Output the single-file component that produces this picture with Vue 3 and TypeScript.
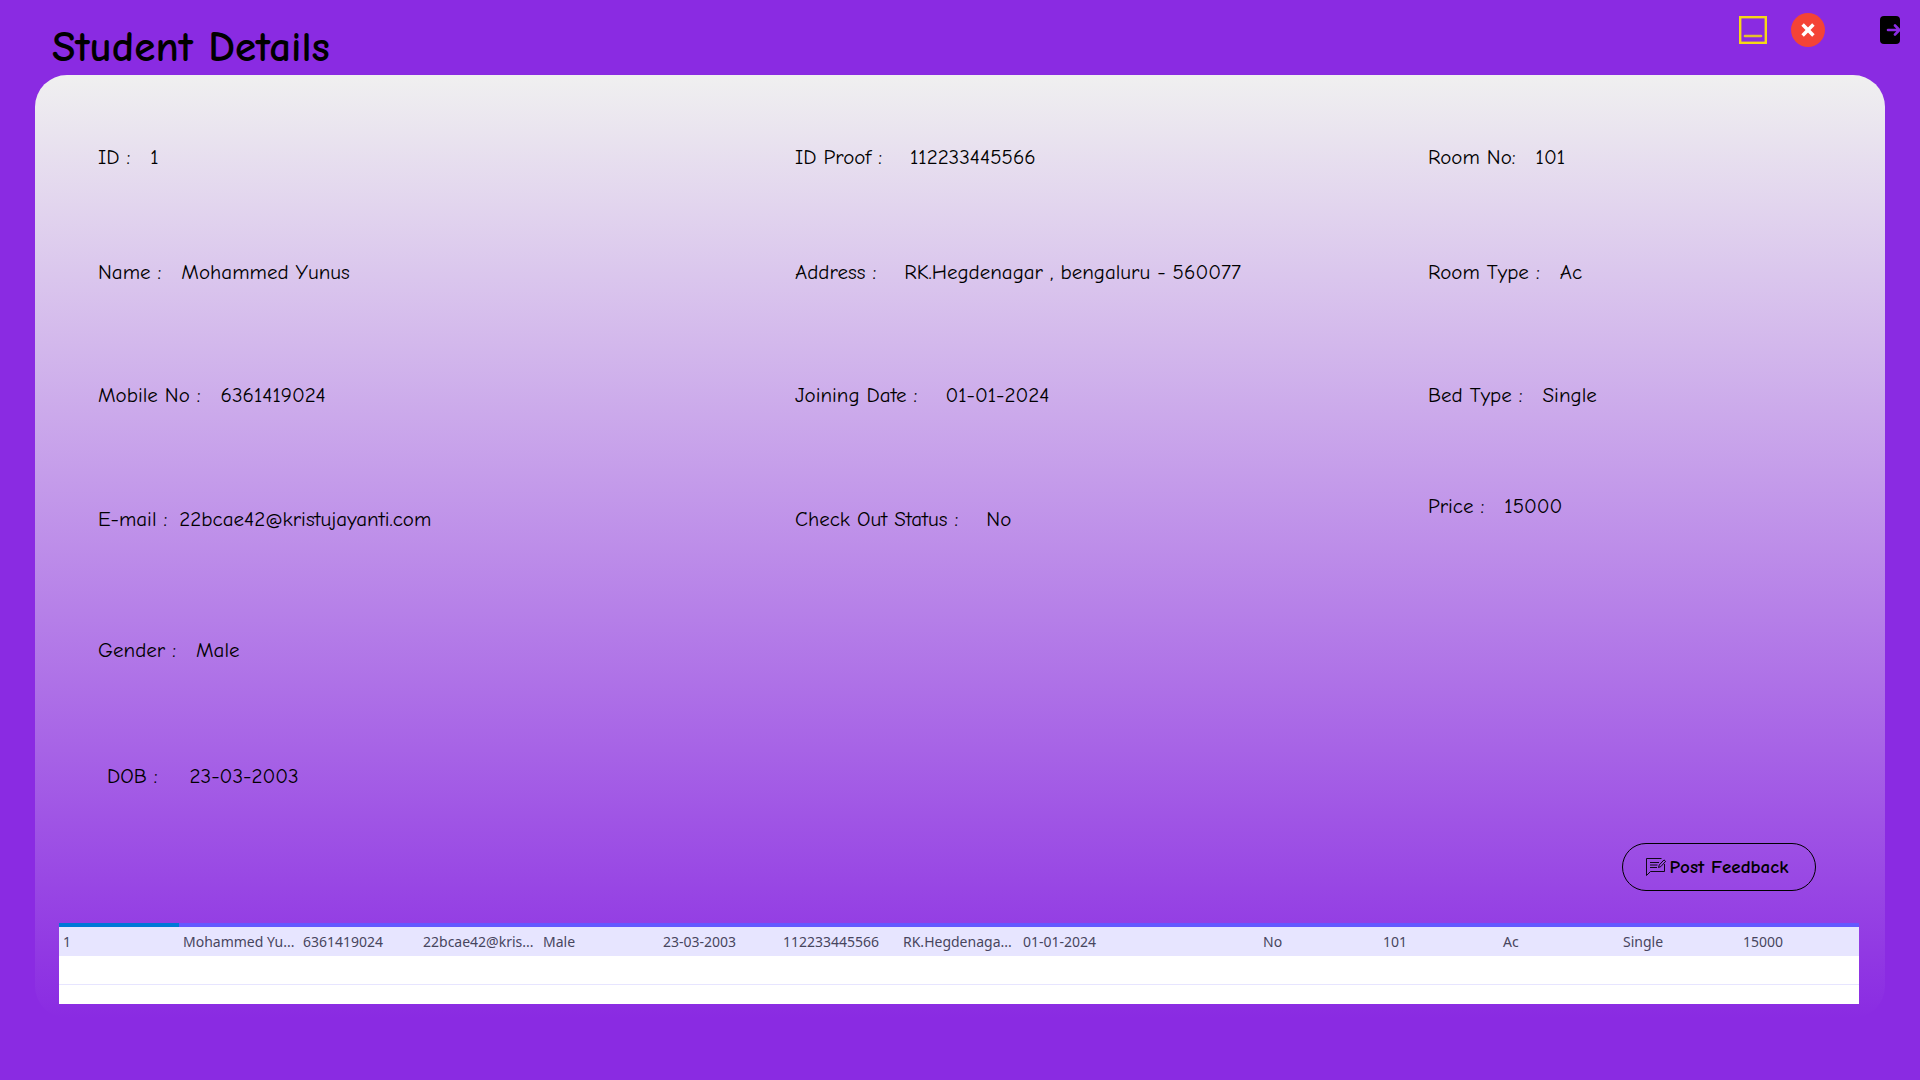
<script setup lang="ts">
interface Field {
  label: string
  value: string
  spacing?: 'tight' | 'inset'
}

const columns: Field[][] = [
  [
    { label: 'ID :', value: '1' },
    { label: 'Name :', value: 'Mohammed Yunus' },
    { label: 'Mobile No :', value: '6361419024' },
    { label: 'E-mail :', value: '22bcae42@kristujayanti.com', spacing: 'tight' },
    { label: 'Gender :', value: 'Male' },
    { label: 'DOB :', value: '23-03-2003', spacing: 'inset' },
  ],
  [
    { label: 'ID Proof :', value: '112233445566' },
    { label: 'Address :', value: 'RK.Hegdenagar , bengaluru - 560077' },
    { label: 'Joining Date :', value: '01-01-2024' },
    { label: 'Check Out Status :', value: 'No' },
  ],
  [
    { label: 'Room No:', value: '101' },
    { label: 'Room Type :', value: 'Ac' },
    { label: 'Bed Type :', value: 'Single' },
    { label: 'Price :', value: '15000' },
  ],
]

const record: string[] = [
  '1', 'Mohammed Yu...', '6361419024', '22bcae42@kris...', 'Male',
  '23-03-2003', '112233445566', 'RK.Hegdenaga...', '01-01-2024',
  '', 'No', '101', 'Ac', 'Single', '15000',
]
</script>

<template>
  <div class="window">
    <header class="titlebar">
      <h1>Student Details</h1>
      <div class="controls">
        <button type="button" class="minimize" aria-label="Minimize">
          <svg width="28" height="28" viewBox="0 0 28 28" fill="none">
            <rect x="1.2" y="1.2" width="25.6" height="25.6" stroke="#f6d816" stroke-width="2.4" />
            <path d="M6 20h16" stroke="#e6c02c" stroke-width="2.6" stroke-linecap="round" />
          </svg>
        </button>
        <button type="button" class="close" aria-label="Close">
          <svg width="34" height="34" viewBox="0 0 34 34">
            <circle cx="17" cy="17" r="17" fill="#f44336" />
            <path d="M11.6 11.6l10.800 10.800M22.400 11.600l-10.800 10.800" stroke="#fff" stroke-width="3.5" />
          </svg>
        </button>
        <button type="button" class="exit" aria-label="Log out">
          <svg width="20" height="28" viewBox="0 0 20 28">
            <rect width="20" height="28" rx="4" fill="#000" />
            <path d="M8 14h11M15 9.500l4.500 4.500-4.500 4.500" fill="none" stroke="#8a2be2" stroke-width="2.600" stroke-linecap="round" stroke-linejoin="round" />
          </svg>
        </button>
      </div>
    </header>

    <main class="panel">
      <section class="details">
        <dl v-for="(fields, i) in columns" :key="i" class="column">
          <div v-for="field in fields" :key="field.label" class="field" :class="field.spacing">
            <dt>{{ field.label }}</dt>
            <dd>{{ field.value }}</dd>
          </div>
        </dl>
      </section>

      <div class="actions">
        <button type="button" class="feedback">
          <svg width="20" height="20" viewBox="0 0 20 20" fill="none" stroke="#000" stroke-width="0.9">
            <path d="M15.500 1.500H.5v17l4-4H18.500V7" />
            <path d="M4 5.500h9M4 8h7.500M4 10.500h7" />
            <path d="M12.500 10.500l.8-2.600 4.700-5 1.600 1.500-4.800 5.200z" />
          </svg>
          Post Feedback
        </button>
      </div>

      <div class="grid">
        <table>
          <thead>
            <tr><th v-for="(_, i) in record" :key="i" scope="col"></th></tr>
          </thead>
          <tbody>
            <tr class="selected"><td v-for="(cell, i) in record" :key="i">{{ cell }}</td></tr>
            <tr class="blank"><td :colspan="record.length"></td></tr>
          </tbody>
        </table>
      </div>
    </main>
  </div>
</template>

<style>
body {
  margin: 0;
  background: #8a2be2;
}
</style>

<style scoped>
.window {
  box-sizing: border-box;
  min-height: 100vh;
  padding: 0 35px 60px;
  background: #8a2be2;
  color: #000;
  font-family: "Comic Sans MS", "Comic Neue", "Noto Sans", sans-serif;
}

.titlebar {
  display: flex;
  justify-content: space-between;
  align-items: flex-start;
  height: 75px;
}

h1 {
  margin: 19px 0 0 17px;
  font-size: 43px;
  line-height: 56px;
  font-weight: 700;
  white-space: nowrap;
}

.controls {
  display: flex;
  align-items: center;
  height: 60px;
  margin-right: -15px;
}

.controls button {
  display: block;
  padding: 0;
  border: 0;
  background: none;
}

.controls svg,
.feedback svg {
  display: block;
}

.minimize {
  margin-right: 24px;
}

.close {
  margin-right: 55px;
}

.panel {
  box-sizing: border-box;
  padding: 64px 26px 14px 24px;
  border-radius: 32px;
  background: linear-gradient(#f0f0f0, #8a2be2);
}

.details {
  display: grid;
  grid-template-columns: 697fr 633fr 431fr;
  margin-left: 39px;
}

.column {
  display: grid;
  grid-template-rows: 115px 123px 124px 131px 126px 36px;
  margin: 0;
}

.column:last-child {
  grid-template-rows: 115px 123px 111px 36px;
}

.field {
  display: flex;
  align-items: flex-start;
  gap: 20px;
  font-size: 21px;
  line-height: 36px;
  white-space: nowrap;
}

.column:nth-child(2) .field {
  gap: 28px;
}

.field.tight {
  gap: 12px;
}

.field.inset {
  gap: 32px;
  padding-left: 9px;
}

dd {
  margin: 0;
}

.actions {
  display: flex;
  justify-content: flex-end;
  padding: 49px 43px 32px 0;
}

.feedback {
  display: flex;
  align-items: center;
  justify-content: center;
  gap: 4px;
  width: 194px;
  height: 48px;
  padding: 0 4px 0 0;
  border: 1px solid #000;
  border-radius: 24px;
  background: transparent;
  color: #000;
  font: inherit;
  font-size: 19px;
  font-weight: 700;
  white-space: nowrap;
}

.grid {
  height: 81px;
  overflow: hidden;
  background: #fff;
}

table {
  width: 100%;
  table-layout: fixed;
  border-collapse: collapse;
  color: #47455e;
  font-family: "Segoe UI", "Noto Sans", sans-serif;
  font-size: 14px;
}

th {
  height: 4px;
  padding: 0;
  background: #6458ff;
}

th:first-child {
  background: #0078d7;
}

td {
  height: 29px;
  padding: 0 4px;
  line-height: 29px;
  white-space: nowrap;
}

.selected {
  background: #e7e5ff;
}

.blank td {
  height: 28px;
  border-bottom: 1px solid #e7e5ff;
}
</style>
